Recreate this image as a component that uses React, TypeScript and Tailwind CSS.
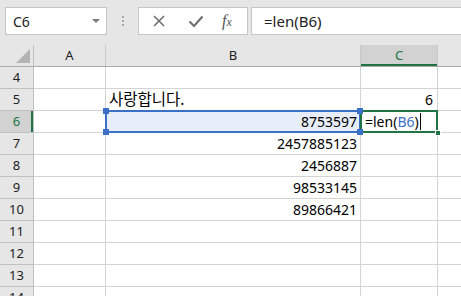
import React from "react";

const font = { fontFamily: '"Noto Sans", "Noto Sans CJK KR", sans-serif' };

const rows = [4, 5, 6, 7, 8, 9, 10, 11, 12, 13, 14];

const bValues: Record<number, string> = {
  7: "2457885123",
  8: "2456887",
  9: "98533145",
  10: "89866421",
};

function Handle({ className }: { className: string }) {
  return <div className={`absolute w-[6px] h-[6px] z-20 ${className}`} />;
}

function Cell({
  children,
  className = "",
}: {
  children?: React.ReactNode;
  className?: string;
}) {
  return (
    <div
      className={`relative h-[22px] border-r border-b border-[#d4d4d4] flex items-center text-[14px] text-black whitespace-nowrap ${className}`}
    >
      {children}
    </div>
  );
}

export default function App() {
  return (
    <div className="w-[461px] h-[296px] overflow-hidden bg-white select-none" style={font}>
      {/* toolbar */}
      <div className="h-[45px] bg-[#e6e6e6] flex items-start pt-[7px] pl-[5px]">
        <div className="w-[102px] h-[28px] bg-white border border-[#c6c6c6] flex items-center justify-between pl-[7px] pr-[6px]">
          <span className="text-[14px] text-[#222]">C6</span>
          <div className="w-0 h-0 border-l-[4px] border-r-[4px] border-t-[4px] border-l-transparent border-r-transparent border-t-[#7a7a7a]" />
        </div>
        <div className="w-[31px] h-[28px] flex flex-col items-center justify-center gap-[2px]">
          <div className="w-[2px] h-[2px] bg-[#a8a8a8]" />
          <div className="w-[2px] h-[2px] bg-[#a8a8a8]" />
          <div className="w-[2px] h-[2px] bg-[#a8a8a8]" />
        </div>
        <div className="w-[110px] h-[28px] bg-white border border-[#c6c6c6] flex items-center pl-[12px]">
          <svg width="14" height="14" viewBox="0 0 14 14" className="ml-[1px]">
            <path d="M2 2 L12 12 M12 2 L2 12" stroke="#707070" strokeWidth="1.6" />
          </svg>
          <svg width="16" height="14" viewBox="0 0 16 14" className="ml-[22px]">
            <path d="M1.5 7.5 L6 12 L14.5 2.5" stroke="#707070" strokeWidth="2.2" fill="none" />
          </svg>
          <span
            className="ml-[18px] text-[16px] italic text-[#555]"
            style={{ fontFamily: '"Liberation Serif", serif' }}
          >
            f<span className="text-[12px]">x</span>
          </span>
        </div>
        <div className="ml-[3px] flex-1 h-[28px] bg-white border border-[#c6c6c6] border-r-0 flex items-center pl-[12px]">
          <span className="text-[15px] text-[#222]">=len(B6)</span>
        </div>
      </div>

      {/* column headers */}
      <div className="grid grid-cols-[34px_72px_255px_77px_1fr] h-[22px] bg-[#e6e6e6] border-b border-[#ababab]">
        <div className="relative border-r border-[#c0c0c0] bg-[#e6e6e6]">
          <svg width="14" height="14" viewBox="0 0 14 14" className="absolute right-[3px] bottom-[3px]">
            <polygon points="14,0 14,14 0,14" fill="#b4b4b4" />
          </svg>
        </div>
        <div className="border-r border-[#c8c8c8] flex items-center justify-center text-[13px] text-[#222]">A</div>
        <div className="border-r border-[#c8c8c8] flex items-center justify-center text-[13px] text-[#222]">B</div>
        <div className="border-r border-[#c8c8c8] bg-[#d2d2d2] flex items-center justify-center text-[13px] text-[#217346] shadow-[inset_0_-2px_0_#217346]">C</div>
        <div />
      </div>

      {/* rows */}
      <div className="grid grid-cols-[34px_72px_255px_77px_1fr]">
        {rows.map((r) => (
          <React.Fragment key={r}>
            <div
              className={`h-[22px] border-b border-r border-[#c0c0c0] flex items-center justify-center text-[13px] ${
                r === 6
                  ? "bg-[#d2d2d2] text-[#217346] shadow-[inset_-2px_0_0_#217346]"
                  : "bg-[#e6e6e6] text-[#222]"
              }`}
            >
              {r}
            </div>
            <Cell />
            {r === 5 ? (
              <Cell className="pl-[3px] text-[15.5px]">사랑합니다.</Cell>
            ) : r === 6 ? (
              <Cell className="justify-end pr-[3px] bg-[#e8eef9]">
                <div className="absolute inset-[-1px] border-2 border-[#3c6fc7] z-10" />
                <Handle className="bg-[#3c6fc7] left-[-3px] top-[-3px]" />
                <Handle className="bg-[#3c6fc7] left-[-3px] bottom-[-3px]" />
                <Handle className="bg-[#3c6fc7] right-[-3px] top-[-3px]" />
                <Handle className="bg-[#3c6fc7] right-[-3px] bottom-[-3px]" />
                <span className="relative z-0">8753597</span>
              </Cell>
            ) : (
              <Cell className="justify-end pr-[3px]">{bValues[r] ?? ""}</Cell>
            )}
            {r === 5 ? (
              <Cell className="justify-end pr-[4px]">6</Cell>
            ) : r === 6 ? (
              <Cell className="pl-[4px]">
                <div className="absolute left-[-1px] right-[-1px] top-[-1px] bottom-[-1px] border-2 border-[#217346] z-10" />
                <Handle className="bg-[#217346] right-[-4px] bottom-[-4px] border border-white" />
                <span>=len(</span>
                <span className="text-[#3c6fc7]">B6</span>
                <span>)</span>
                <div className="ml-[1px] w-px h-[17px] bg-black" />
              </Cell>
            ) : (
              <Cell />
            )}
            <div className="h-[22px] border-b border-[#d4d4d4]" />
          </React.Fragment>
        ))}
      </div>
    </div>
  );
}
